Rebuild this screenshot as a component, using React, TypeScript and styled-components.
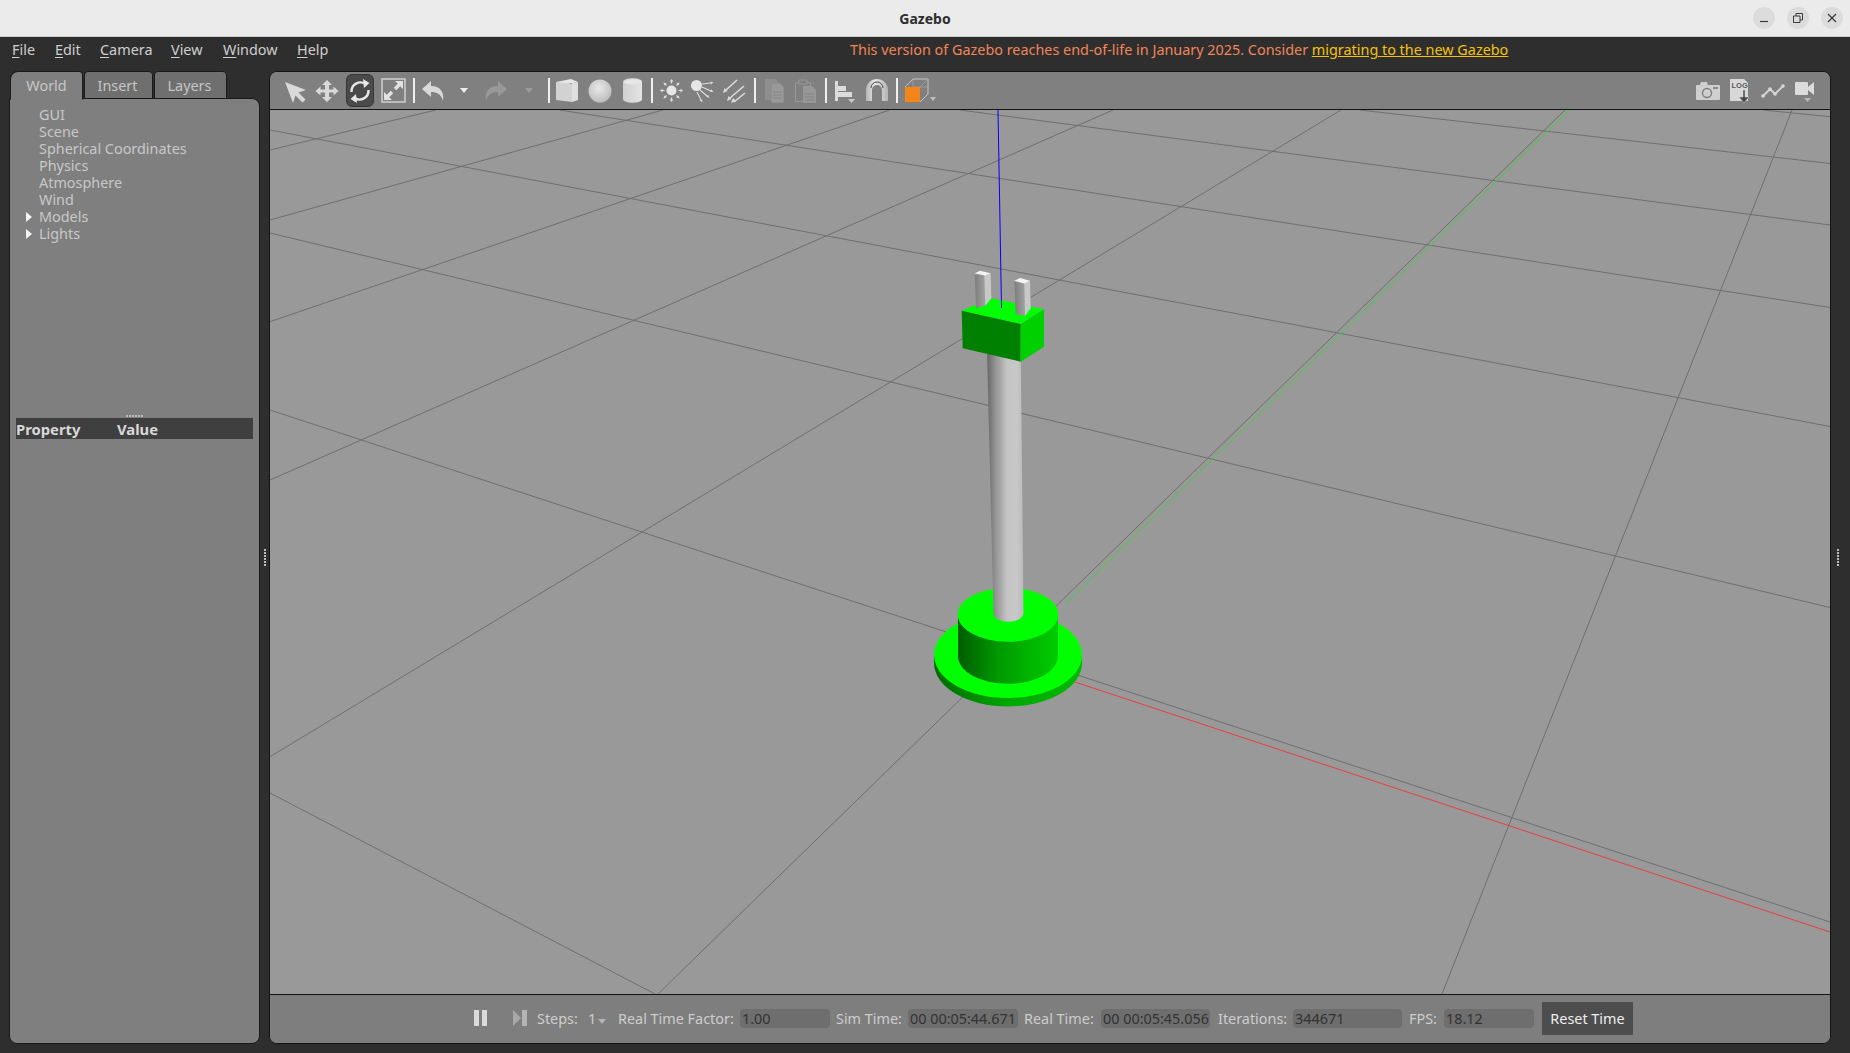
import React from "react";
import styled, { createGlobalStyle } from "styled-components";

const Global = createGlobalStyle`
  html, body { margin: 0; padding: 0; background: #2e2e2e; }
  body { font-family: "Noto Sans", "Open Sans", sans-serif; font-size: 14.4px; }
  #root { width: 1850px; height: 1053px; overflow: hidden; }
`;

const Page = styled.div`
  width: 1850px;
  height: 1053px;
  display: flex;
  flex-direction: column;
  background: #2e2e2e;
`;

const TitleBar = styled.header`
  height: 36px;
  flex: none;
  position: relative;
  display: flex;
  align-items: center;
  justify-content: center;
  background: #ebebeb;
  border-bottom: 1px solid #cfcfcf;
`;

const Title = styled.div`
  font-weight: 700;
  font-size: 14px;
  color: #2e2e2e;
`;

const WindowButtons = styled.div`
  position: absolute;
  right: 7px;
  top: 7px;
  display: flex;
  gap: 12px;
`;

const WindowButton = styled.div`
  width: 22px;
  height: 22px;
  border-radius: 50%;
  background: #dcdcdc;
  display: flex;
  align-items: center;
  justify-content: center;
`;

const MenuBar = styled.nav`
  height: 34px;
  flex: none;
  box-sizing: border-box;
  position: relative;
  display: flex;
  align-items: center;
  padding: 0 0 9px 12px;
  color: #cfcfcf;
`;

const MenuItem = styled.span<{ $w: number }>`
  width: ${(p) => p.$w}px;
  flex: none;
`;

const Mnemonic = styled.span`
  text-decoration: underline;
  text-underline-offset: 2px;
`;

const Notice = styled.div`
  position: absolute;
  left: 850px;
  top: 3px;
  white-space: nowrap;
  color: #f2855a;
`;

const NoticeLink = styled.span`
  color: #f4c20d;
  text-decoration: underline;
`;

const Workspace = styled.div`
  flex: 1;
  min-height: 0;
  display: flex;
  padding: 0 0 9px 9px;
`;

const LeftColumn = styled.aside`
  width: 251px;
  flex: none;
  display: flex;
  flex-direction: column;
`;

const Tabs = styled.div`
  height: 28px;
  flex: none;
  display: flex;
  padding-left: 1px;
  gap: 1px;
  margin-bottom: -1px;
  position: relative;
  z-index: 1;
`;

const Tab = styled.div<{ $active?: boolean; $w: number }>`
  width: ${(p) => p.$w}px;
  box-sizing: border-box;
  display: flex;
  align-items: center;
  justify-content: center;
  padding-right: ${(p) => (p.$active ? 0 : 2)}px;
  color: #c6c6c6;
  border: 1px solid #1a1a1a;
  border-bottom-color: ${(p) => (p.$active ? "#7f7f7f" : "#1a1a1a")};
  border-radius: ${(p) => (p.$active ? "8px 4px 0 0" : "4px 4px 0 0")};
  background: ${(p) => (p.$active ? "#7f7f7f" : "#6f6f6f")};
  height: ${(p) => (p.$active ? "29px" : "28px")};
`;

const Panel = styled.div`
  flex: 1;
  min-height: 0;
  box-sizing: border-box;
  background: #7f7f7f;
  border: 1px solid #1a1a1a;
  border-radius: 0 8px 8px 8px;
  display: flex;
  flex-direction: column;
`;

const Tree = styled.ul`
  list-style: none;
  margin: 0;
  padding: 7px 0 0;
  height: 315px;
  flex: none;
  box-sizing: border-box;
`;

const TreeRow = styled.li`
  height: 17px;
  display: flex;
  align-items: center;
  padding-left: 16px;
  color: #c8c8c8;
`;

const Caret = styled.span<{ $open?: boolean }>`
  flex: none;
  display: block;
  height: 0;
  box-sizing: border-box;
  border-top: 5.5px solid transparent;
  border-bottom: 5.5px solid transparent;
  border-left: ${(p) => (p.$open ? "6px solid #f4f4f4" : "0 solid transparent")};
  margin-right: ${(p) => (p.$open ? "7px" : "13px")};
  width: ${(p) => (p.$open ? "6px" : "0")};
`;

const GripRow = styled.div`
  height: 3px;
  flex: none;
  display: flex;
  justify-content: center;
  gap: 1px;
  padding-top: 1px;
`;

const GripDot = styled.i`
  width: 2px;
  height: 2px;
  background: #bcbcbc;
  display: block;
`;

const PropertyHeader = styled.div`
  height: 21px;
  flex: none;
  margin: 0 6px;
  background: #3f3f3f;
  display: flex;
  align-items: center;
  color: #d8d8d8;
  font-weight: 700;
  font-size: 14.8px;
`;

const HeaderCell = styled.span<{ $w: number }>`
  width: ${(p) => p.$w}px;
`;

const Splitter = styled.div<{ $w: number }>`
  width: ${(p) => p.$w}px;
  flex: none;
  display: flex;
  flex-direction: column;
  align-items: center;
  justify-content: center;
  gap: 1px;
  padding-bottom: 1px;
`;

const Main = styled.main`
  width: 1562px;
  flex: none;
  box-sizing: border-box;
  border: 1px solid #141414;
  border-radius: 8px;
  overflow: hidden;
  display: flex;
  flex-direction: column;
  background: #808080;
`;

const Toolbar = styled.div`
  height: 38px;
  flex: none;
  box-sizing: border-box;
  border-bottom: 1px solid #141414;
  display: flex;
  align-items: center;
  padding-left: 9px;
  padding-right: 9px;
  background: #808080;
`;

const Tool = styled.div<{ $w: number }>`
  width: ${(p) => p.$w}px;
  height: 33px;
  flex: none;
  display: flex;
  align-items: center;
  justify-content: center;
`;

const ActiveTool = styled(Tool)`
  background: #4a4a4a;
  border: 1px solid #383838;
  border-radius: 6px;
  box-sizing: border-box;
  margin: 0 2px 0 3px;
`;

const Separator = styled.div<{ $w: number }>`
  width: ${(p) => p.$w}px;
  height: 25px;
  flex: none;
  display: flex;
  justify-content: center;
  &::before {
    content: "";
    width: 2px;
    height: 100%;
    background: #efefef;
  }
`;

const Spacer = styled.div`
  flex: 1;
`;

const Viewport = styled.div`
  height: 884px;
  flex: none;
  background: #999999;
  border-bottom: 1px solid #141414;
  box-sizing: content-box;
`;

const Scene = styled.svg`
  display: block;
  width: 1560px;
  height: 884px;
`;

const BottomBar = styled.footer`
  flex: 1;
  box-sizing: border-box;
  display: flex;
  align-items: center;
  padding: 0 0 2px 203px;
  background: #7e7e7e;
  color: #cdcdcd;
`;

const Label = styled.span<{ $w: number }>`
  width: ${(p) => p.$w}px;
  flex: none;
  white-space: nowrap;
`;

const Field = styled.div<{ $w: number; $mr: number }>`
  width: ${(p) => p.$w}px;
  margin-right: ${(p) => p.$mr}px;
  height: 19px;
  flex: none;
  box-sizing: border-box;
  padding-left: 2px;
  border-radius: 4px;
  background: #6e6e6e;
  color: #333333;
  line-height: 19px;
  white-space: nowrap;
  overflow: hidden;
`;

const ResetButton = styled.button`
  width: 91px;
  height: 33px;
  flex: none;
  padding: 0;
  border: 0;
  border-radius: 1px;
  background: #4d4d4d;
  color: #eeeeee;
  font: inherit;
`;

const BarIcon = styled.span<{ $w: number; $ml?: number }>`
  width: ${(p) => p.$w}px;
  margin-left: ${(p) => p.$ml ?? 0}px;
  height: 18px;
  flex: none;
  display: block;
`;

const c = "#d9d9d9";

const Drop = ({ fill = "#eeeeee" }: { fill?: string }) => (
  <svg width="8" height="5" viewBox="0 0 8 5"><path d="M0 0h8L4 5z" fill={fill} /></svg>
);

const ArrowIcon = () => (
  <svg width="24" height="24" viewBox="0 0 24 24"><path d="M2 3l21 8-7.5 2.5 7 7-3 3-7-7L10 24z" fill={c} /></svg>
);
const MoveIcon = () => (
  <svg width="24" height="24" viewBox="0 0 24 24"><path d="M12 1l5 5h-3v4.500h4.500V7.500l5 4.500-5 4.500v-3H14V18h3l-5 5-5-5h3v-4.500H5.500v3l-5-4.500 5-4.500v3H10V6H7z" fill={c} /></svg>
);
const RotateIcon = () => (
  <svg width="24" height="26" viewBox="0 0 24 26">
    <path d="M3.500 14a9 9 0 0 1 14-8" fill="none" stroke="#e8e8e8" strokeWidth="2.400" />
    <path d="M20.500 12a9 9 0 0 1-14 8" fill="none" stroke="#e8e8e8" strokeWidth="2.400" />
    <path d="M15 1l1 9 5.500-5zM9 25l-1-9-5.500 5z" fill="#e8e8e8" />
  </svg>
);
const ScaleIcon = () => (
  <svg width="25" height="25" viewBox="0 0 25 25">
    <path d="M1 1h23v23H1z" fill="none" stroke="#d0d0d0" strokeWidth="1.500" />
    <path d="M14 3h8v8l-2.800-2.800-4 4-2.400-2.400 4-4zM11 22H3v-8l2.800 2.800 4-4 2.400 2.400-4 4z" fill="#e2e2e2" />
  </svg>
);
const UndoIcon = ({ flip, fill }: { flip?: boolean; fill: string }) => (
  <svg width="24" height="24" viewBox="0 0 24 24" style={flip ? { transform: "scaleX(-1)" } : undefined}>
    <path d="M10 2L1 10l9 8v-5c6 0 10 2 12 9 1.500-9-3-15-12-15z" fill={fill} />
  </svg>
);
const BoxIcon = () => (
  <svg width="24" height="25" viewBox="0 0 24 25">
    <path d="M1 4l15-3 7 3-16 3z" fill="#e6e6e6" />
    <path d="M1 4l16 2v18L1 22z" fill="#d2d2d2" />
    <path d="M17 5l6-1v18l-6 2z" fill="#dedede" />
  </svg>
);
const SphereIcon = () => (
  <svg width="24" height="24" viewBox="0 0 24 24">
    <defs>
      <radialGradient id="sph" cx="0.45" cy="0.38" r="0.7">
        <stop offset="0" stopColor="#e8e8e8" />
        <stop offset="1" stopColor="#b8b8b8" />
      </radialGradient>
    </defs>
    <circle cx="12" cy="12" r="11.500" fill="url(#sph)" />
  </svg>
);
const CylinderIcon = () => (
  <svg width="19" height="25" viewBox="0 0 19 25">
    <defs>
      <linearGradient id="cyl" x1="0" x2="1">
        <stop offset="0" stopColor="#d0d0d0" />
        <stop offset="1" stopColor="#e4e4e4" />
      </linearGradient>
    </defs>
    <path d="M0 4c0-5 19-5 19 0v17c0 5-19 5-19 0z" fill="url(#cyl)" />
    <ellipse cx="9.500" cy="4" rx="8.500" ry="2.500" fill="#e6e6e6" />
  </svg>
);
const SunIcon = () => (
  <svg width="23" height="23" viewBox="0 0 23 23">
    <circle cx="11.500" cy="11.500" r="5" fill="#e6e6e6" />
    <g stroke="#dcdcdc" strokeWidth="1.200">
      <path d="M11.500 1.500v3M11.500 18.500v3M1.500 11.500h3M18.500 11.500h3M4.500 4.500l2 2M16.500 16.500l2 2M18.500 4.500l-2 2M6.500 16.500l-2 2" />
    </g>
    <g fill="#dcdcdc">
      <path d="M11.500 0l2 2.500h-4zM11.500 23l-2-2.500h4zM0 11.500l2.500-2v4zM23 11.500l-2.500 2v-4zM3.500 3.500l3 .8-2.200 2.200zM19.500 19.500l-3-.8 2.200-2.200zM19.500 3.500l-.8 3-2.200-2.200zM3.500 19.500l.8-3 2.200 2.200z" />
    </g>
  </svg>
);
const SpotIcon = () => (
  <svg width="24" height="24" viewBox="0 0 24 24">
    <circle cx="6.500" cy="6.500" r="5.500" fill="#e6e6e6" />
    <g stroke="#dcdcdc" strokeWidth="1.100">
      <path d="M12 5l9-1M12 8l9 4M10 11l7 6M7 13l4 8" />
    </g>
    <g fill="#dcdcdc">
      <path d="M23.500 3.500l-3 2v-3zM23.500 13l-3.500-.2 1.200-2.500zM19.500 19l-3.200-1.200 1.800-2zM12.500 23.500l-2.800-2 2.400-1.200z" />
    </g>
  </svg>
);
const DirIcon = () => (
  <svg width="24" height="24" viewBox="0 0 24 24">
    <g stroke="#dcdcdc" strokeWidth="1.600">
      <path d="M15 1L4 11M22 7L8 19M23 14L12 23" />
    </g>
    <g fill="#dcdcdc">
      <path d="M1 14l1.500-5 3 3zM5 22l1.500-5 3 3zM9 24l2-5 3 3z" />
    </g>
  </svg>
);
const CopyIcon = () => (
  <svg width="19" height="24" viewBox="0 0 19 24">
    <path d="M0 0h10l3 3v18H0z" fill="#8f8f8f" />
    <path d="M6 4h9l4 4v16H6z" fill="#999999" stroke="#858585" strokeWidth="0.800" />
    <path d="M8 13h9M8 16h9M8 19h9" stroke="#878787" strokeWidth="1" />
  </svg>
);
const PasteIcon = () => (
  <svg width="21" height="24" viewBox="0 0 21 24">
    <path d="M.500 3.500h15v19H.500z" fill="none" stroke="#989898" strokeWidth="1" />
    <path d="M4 1h8v4H4z" fill="#7f7f7f" stroke="#989898" strokeWidth="1" />
    <path d="M8 7h9l4 4v13H8z" fill="#979797" />
    <path d="M10 15h9M10 18h9M10 21h9" stroke="#858585" strokeWidth="1" />
  </svg>
);
const AlignIcon = () => (
  <svg width="20" height="24" viewBox="0 0 20 24">
    <path d="M0 2h3v20H0z" fill="#dcdcdc" />
    <path d="M3 7h8v5H3zM3 13h14v5H3z" fill="#dcdcdc" />
    <path d="M13 20h7l-3.500 4z" fill="#c8c8c8" />
  </svg>
);
const MagnetIcon = () => (
  <svg width="22" height="23" viewBox="0 0 22 23">
    <defs>
      <linearGradient id="mag" x1="0" x2="1">
        <stop offset="0" stopColor="#b4b4b4" />
        <stop offset="0.4" stopColor="#e8e8e8" />
        <stop offset="1" stopColor="#b4b4b4" />
      </linearGradient>
    </defs>
    <path d="M0 22V11a11 11 0 0 1 22 0v11h-6V11a5 5 0 0 0-10 0v11z" fill="url(#mag)" />
    <path d="M5 9a6 6 0 0 1 12 0" fill="none" stroke="#4a4a4a" strokeWidth="1" />
  </svg>
);
const ViewIcon = () => (
  <svg width="32" height="25" viewBox="0 0 32 25">
    <path d="M1 9L9 1h15v15l-8 8" fill="none" stroke="#c6c6c6" strokeWidth="1" />
    <path d="M9 1v8M24 1l-8 8M9 9h15" fill="none" stroke="#a8a8a8" strokeWidth="0.700" />
    <path d="M1 9h15v15H1z" fill="#f58518" />
    <path d="M26 19h6l-3 4z" fill="#c0c0c0" />
  </svg>
);
const CameraIcon = () => (
  <svg width="24" height="18" viewBox="0 0 24 18">
    <path d="M1 3h3l1-3h6l1 3h11a1 1 0 0 1 1 1v13a1 1 0 0 1-1 1H1a1 1 0 0 1-1-1V4a1 1 0 0 1 1-1z" fill="#cfcfcf" />
    <circle cx="11" cy="11" r="4.500" fill="none" stroke="#7f7f7f" strokeWidth="1.400" />
    <path d="M17 5h5v2h-5z" fill="#8a8a8a" />
  </svg>
);
const LogIcon = () => (
  <svg width="20" height="24" viewBox="0 0 20 24">
    <path d="M0 0h14l4 4v18H0z" fill="#d8d8d8" />
    <text x="1.500" y="9" fontSize="7.500" fontWeight="700" fontFamily="Liberation Sans, sans-serif" fill="#5c5c5c">LOG</text>
    <path d="M13 11h2v7h4l-5 6-5-6h4z" fill="#4a4a4a" stroke="#d8d8d8" strokeWidth="0.500" />
  </svg>
);
const PlotIcon = () => (
  <svg width="24" height="14" viewBox="0 0 24 14">
    <path d="M2 12l7-7 5 5 8-8" fill="none" stroke="#d8d8d8" strokeWidth="1.800" />
    <g fill="#d8d8d8">
      <circle cx="2" cy="12" r="1.800" /><circle cx="9" cy="5" r="1.800" /><circle cx="14" cy="10" r="1.800" /><circle cx="22" cy="2" r="1.800" />
    </g>
  </svg>
);
const VideoIcon = () => (
  <svg width="20" height="24" viewBox="0 0 20 24">
    <rect x="0" y="3" width="13" height="13" rx="1" fill="#dcdcdc" />
    <path d="M13 8l6-5v13l-6-5z" fill="#dcdcdc" />
    <path d="M9 19h7l-3.500 4z" fill="#b8b8b8" />
  </svg>
);

const greyLines: [number, number, number, number][] = [
  [960, 110, 1830, 225],
  [1360, 110, 1830, 163.500],
  [1763, 110, 1830, 116.700],
  [559.700, 110, 1830, 307.500],
  [270, 130, 1830, 426.500],
  [270, 233, 1830, 607.500],
  [270, 410, 1830, 922],
  [270, 793, 655, 994],
  [270, 150, 436, 110],
  [270, 220, 663, 110],
  [270, 321.700, 889.600, 110],
  [270, 480, 1113, 110],
  [270, 756.700, 1341, 110],
  [658, 994, 1565, 110],
  [1792, 110, 1442, 994],
];

const Model = () => (
  <g>
    <defs>
      <linearGradient id="lowerSide" x1="0" x2="1">
        <stop offset="0" stopColor="#006a00" />
        <stop offset="0.5" stopColor="#00a800" />
        <stop offset="1" stopColor="#00b800" />
      </linearGradient>
      <linearGradient id="upperSide" x1="0" x2="1">
        <stop offset="0" stopColor="#005c00" />
        <stop offset="0.4" stopColor="#009a00" />
        <stop offset="1" stopColor="#00cc00" />
      </linearGradient>
      <linearGradient id="column" x1="0" x2="1">
        <stop offset="0" stopColor="#666666" />
        <stop offset="0.2" stopColor="#8e8e8e" />
        <stop offset="0.55" stopColor="#c4c4c4" />
        <stop offset="0.8" stopColor="#c8c8c8" />
        <stop offset="1" stopColor="#bbbbbb" />
      </linearGradient>
      <linearGradient id="peg" x1="0" x2="1">
        <stop offset="0" stopColor="#7e7e7e" />
        <stop offset="1" stopColor="#a0a0a0" />
      </linearGradient>
    </defs>
    <path d="M934 655v8a74 43.500 0 0 0 148 0v-8z" fill="url(#lowerSide)" />
    <ellipse cx="1008" cy="655" rx="74" ry="43" fill="#00ff00" />
    <path d="M958 615v41a49.500 27.500 0 0 0 100 0v-41z" fill="url(#upperSide)" />
    <ellipse cx="1008" cy="614.700" rx="50.300" ry="27" fill="#00ff00" />
    <path d="M987 350L993.500 613a15 8.700 0 0 0 30 0L1020.700 350z" fill="url(#column)" />
    <polygon points="961.700,310.700 991.700,298.300 1044,309.300 1020.700,324" fill="#00ff00" />
    <polygon points="961.700,310.700 1020.700,324 1020.700,361.700 962.700,348.300" fill="#008000" />
    <polygon points="1020.700,324 1044,309.300 1044,346.700 1020.700,361.700" fill="#00d000" />
    <line x1="998" y1="110" x2="1001.500" y2="308" stroke="#0000ff" strokeWidth="1" />
    <polygon points="974.700,275 984.300,275 985.300,305.700 976,308.300" fill="url(#peg)" />
    <polygon points="984.300,275 990.700,273.300 991.300,298.300 985.300,305.700" fill="#c8c8c8" />
    <polygon points="974.700,273.300 980,270.700 990.700,273.300 985,275.500" fill="#f4f4f4" />
    <polygon points="1014.300,281.700 1024.300,283.300 1025,316 1015.700,314" fill="url(#peg)" />
    <polygon points="1024.300,283.300 1030,280.700 1030.700,308.300 1025,316" fill="#c8c8c8" />
    <polygon points="1014.300,280.700 1020,278 1030,280.700 1024.300,283.500" fill="#f4f4f4" />
  </g>
);

const treeItems: [string, boolean][] = [
  ["GUI", false],
  ["Scene", false],
  ["Spherical Coordinates", false],
  ["Physics", false],
  ["Atmosphere", false],
  ["Wind", false],
  ["Models", true],
  ["Lights", true],
];

const dots = [0, 1, 2, 3, 4, 5];

export default function App() {
  return (
    <Page>
      <Global />
      <TitleBar>
        <Title>Gazebo</Title>
        <WindowButtons>
          <WindowButton>
            <svg width="10" height="10" viewBox="0 0 10 10"><path d="M1 8.500h8" stroke="#3a3a3a" strokeWidth="1.200" /></svg>
          </WindowButton>
          <WindowButton>
            <svg width="10" height="10" viewBox="0 0 10 10"><path d="M.500 3h6.500v6.500H.500zM3 3V.500h6.500V7H7" fill="none" stroke="#3a3a3a" strokeWidth="1" /></svg>
          </WindowButton>
          <WindowButton>
            <svg width="10" height="10" viewBox="0 0 10 10"><path d="M1 1l8 8M9 1l-8 8" stroke="#3a3a3a" strokeWidth="1.300" /></svg>
          </WindowButton>
        </WindowButtons>
      </TitleBar>
      <MenuBar>
        <MenuItem $w={43}><Mnemonic>F</Mnemonic>ile</MenuItem>
        <MenuItem $w={45}><Mnemonic>E</Mnemonic>dit</MenuItem>
        <MenuItem $w={71}><Mnemonic>C</Mnemonic>amera</MenuItem>
        <MenuItem $w={52}><Mnemonic>V</Mnemonic>iew</MenuItem>
        <MenuItem $w={74}><Mnemonic>W</Mnemonic>indow</MenuItem>
        <MenuItem $w={40}><Mnemonic>H</Mnemonic>elp</MenuItem>
        <Notice>
          This version of Gazebo reaches end-of-life in January 2025. Consider{" "}
          <NoticeLink>migrating to the new Gazebo</NoticeLink>
        </Notice>
      </MenuBar>
      <Workspace>
        <LeftColumn>
          <Tabs>
            <Tab $active $w={73}>World</Tab>
            <Tab $w={69}>Insert</Tab>
            <Tab $w={73}>Layers</Tab>
          </Tabs>
          <Panel>
            <Tree>
              {treeItems.map(([name, open]) => (
                <TreeRow key={name}>
                  <Caret $open={open} />
                  {name}
                </TreeRow>
              ))}
            </Tree>
            <GripRow>
              {dots.map((d) => <GripDot key={d} />)}
            </GripRow>
            <PropertyHeader>
              <HeaderCell $w={101}>Property</HeaderCell>
              <HeaderCell $w={100}>Value</HeaderCell>
            </PropertyHeader>
          </Panel>
        </LeftColumn>
        <Splitter $w={9}>
          {dots.map((d) => <GripDot key={d} />)}
        </Splitter>
        <Main>
          <Toolbar>
            <Tool $w={32}><ArrowIcon /></Tool>
            <Tool $w={32}><MoveIcon /></Tool>
            <ActiveTool $w={28}><RotateIcon /></ActiveTool>
            <Tool $w={34}><ScaleIcon /></Tool>
            <Separator $w={8} />
            <Tool $w={30}><UndoIcon fill="#d9d9d9" /></Tool>
            <Tool $w={32}><Drop /></Tool>
            <Tool $w={32}><UndoIcon flip fill="#999999" /></Tool>
            <Tool $w={34}><Drop fill="#9c9c9c" /></Tool>
            <Separator $w={6} />
            <Tool $w={30}><BoxIcon /></Tool>
            <Tool $w={36}><SphereIcon /></Tool>
            <Tool $w={28}><CylinderIcon /></Tool>
            <Separator $w={12} />
            <Tool $w={26}><SunIcon /></Tool>
            <Tool $w={36}><SpotIcon /></Tool>
            <Tool $w={28}><DirIcon /></Tool>
            <Separator $w={14} />
            <Tool $w={24}><CopyIcon /></Tool>
            <Tool $w={38}><PasteIcon /></Tool>
            <Separator $w={4} />
            <Tool $w={34}><AlignIcon /></Tool>
            <Tool $w={30}><MagnetIcon /></Tool>
            <Separator $w={10} />
            <Tool $w={36}><ViewIcon /></Tool>
            <Spacer />
            <Tool $w={32}><CameraIcon /></Tool>
            <Tool $w={32}><LogIcon /></Tool>
            <Tool $w={33}><PlotIcon /></Tool>
            <Tool $w={32}><VideoIcon /></Tool>
          </Toolbar>
          <Viewport>
            <Scene viewBox="270 110 1560 884">
              <g stroke="#6f6f6f" strokeWidth="1" fill="none">
                {greyLines.map(([x1, y1, x2, y2], i) => (
                  <line key={i} x1={x1} y1={y1} x2={x2} y2={y2} />
                ))}
              </g>
              <line x1="1066" y1="603" x2="1569" y2="110" stroke="#3fd03f" strokeWidth="1" />
              <line x1="1075" y1="682" x2="1830" y2="932" stroke="#e84040" strokeWidth="1" />
              <Model />
            </Scene>
          </Viewport>
          <BottomBar>
            <BarIcon $w={15}>
              <svg width="15" height="18" viewBox="0 0 15 18"><path d="M1 1h5v16H1zM9 1h5v16H9z" fill="#dadada" /></svg>
            </BarIcon>
            <BarIcon $w={14} $ml={25}>
              <svg width="14" height="18" viewBox="0 0 14 18"><path d="M0 1l8 8-8 8z" fill="#a8a8a8" /><path d="M9 1h5v16H9z" fill="#b4b4b4" /></svg>
            </BarIcon>
            <BarIcon $w={10} />
            <Label $w={51}>Steps:</Label>
            <Label $w={10}>1</Label>
            <Label $w={20}><Drop fill="#b4b4b4" /></Label>
            <Label $w={122}>Real Time Factor:</Label>
            <Field $w={90} $mr={6}>1.00</Field>
            <Label $w={72}>Sim Time:</Label>
            <Field $w={110} $mr={6}>00 00:05:44.671</Field>
            <Label $w={77}>Real Time:</Label>
            <Field $w={109} $mr={8}>00 00:05:45.056</Field>
            <Label $w={75}>Iterations:</Label>
            <Field $w={109} $mr={7}>344671</Field>
            <Label $w={35}>FPS:</Label>
            <Field $w={90} $mr={8}>18.12</Field>
            <ResetButton>Reset Time</ResetButton>
          </BottomBar>
        </Main>
        <Splitter $w={13}>
          {dots.map((d) => <GripDot key={d} />)}
        </Splitter>
      </Workspace>
    </Page>
  );
}
